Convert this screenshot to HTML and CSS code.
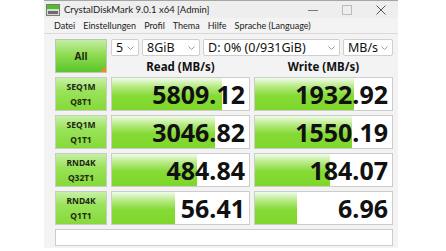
FILE: index.html
```html
<!DOCTYPE html>
<html lang="de">
<head>
    <meta charset="UTF-8">
    <meta name="viewport" content="width=device-width, initial-scale=1.0">
    <title>CrystalDiskMark</title>
    <link rel="stylesheet" href="styles.css">
</head>
<body>
    <div class="window">
        <div class="titlebar">
            <svg class="app-icon" width="14" height="12" viewBox="0 0 14 12">
                <rect x="0.5" y="0.5" width="13" height="11" fill="#d9d9d9" stroke="#7a7a7a"/>
                <rect x="1" y="1" width="12" height="4" fill="#4cbf2a"/>
                <rect x="2" y="7" width="10" height="3" fill="#6b6b6b"/>
            </svg>
            <span class="title">CrystalDiskMark 9.0.1 x64 [Admin]</span>
            <div class="controls">
                <svg width="10" height="10" viewBox="0 0 10 10"><line x1="0" y1="5.5" x2="10" y2="5.5" stroke="#777" stroke-width="1"/></svg>
                <svg width="10" height="10" viewBox="0 0 10 10"><rect x="0.5" y="0.5" width="9" height="9" fill="none" stroke="#bbb" stroke-width="1"/></svg>
                <svg width="10" height="10" viewBox="0 0 10 10"><path d="M0.5 0.5 L9.5 9.5 M9.5 0.5 L0.5 9.5" stroke="#555" stroke-width="1"/></svg>
            </div>
        </div>
        <div class="menubar">
            <span>Datei</span>
            <span>Einstellungen</span>
            <span>Profil</span>
            <span>Thema</span>
            <span>Hilfe</span>
            <span>Sprache (Language)</span>
        </div>

        <div class="main">
            <div class="all-btn">All</div>
            <div class="selects">
                <div class="select sel-count">5<svg width="7" height="4" viewBox="0 0 7 4"><path d="M0.5 0.5 L3.5 3.5 L6.5 0.5" fill="none" stroke="#999"/></svg></div>
                <div class="select sel-size">8GiB<svg width="7" height="4" viewBox="0 0 7 4"><path d="M0.5 0.5 L3.5 3.5 L6.5 0.5" fill="none" stroke="#999"/></svg></div>
                <div class="select sel-drive">D: 0% (0/931GiB)<svg width="7" height="4" viewBox="0 0 7 4"><path d="M0.5 0.5 L3.5 3.5 L6.5 0.5" fill="none" stroke="#999"/></svg></div>
                <div class="select sel-unit">MB/s<svg width="7" height="4" viewBox="0 0 7 4"><path d="M0.5 0.5 L3.5 3.5 L6.5 0.5" fill="none" stroke="#999"/></svg></div>
            </div>
            <div class="head">Read (MB/s)</div>
            <div class="head">Write (MB/s)</div>

            <div class="label">SEQ1M<br>Q8T1</div>
            <div class="cell"><div class="fill" style="width: 80%"></div><span class="value">5809.12</span></div>
            <div class="cell"><div class="fill" style="width: 72%"></div><span class="value">1932.92</span></div>

            <div class="label">SEQ1M<br>Q1T1</div>
            <div class="cell"><div class="fill" style="width: 75%"></div><span class="value">3046.82</span></div>
            <div class="cell"><div class="fill" style="width: 71%"></div><span class="value">1550.19</span></div>

            <div class="label">RND4K<br>Q32T1</div>
            <div class="cell"><div class="fill" style="width: 62%"></div><span class="value">484.84</span></div>
            <div class="cell"><div class="fill" style="width: 55%"></div><span class="value">184.07</span></div>

            <div class="label">RND4K<br>Q1T1</div>
            <div class="cell"><div class="fill" style="width: 46%"></div><span class="value">56.41</span></div>
            <div class="cell"><div class="fill" style="width: 31%"></div><span class="value">6.96</span></div>
        </div>
        <div class="status"></div>
    </div>
</body>
</html>
```

FILE: styles.css
```css
body {
    margin: 0;
    background: #ffffff;
    font-family: "Noto Sans", "Open Sans", sans-serif;
}
.window {
    margin-left: 44px;
    width: 354px;
    height: 248px;
    background: #f3f3f3;
    border-top: 1px solid #a5a5a5;
    box-sizing: border-box;
}
.titlebar {
    display: flex;
    align-items: center;
    height: 17px;
    padding-left: 2px;
    background: #eeeeee;
}
.app-icon {
    margin-right: 4px;
}
.title {
    font-family: Lato, sans-serif;
    font-size: 9.5px;
    color: #222;
}
.controls {
    margin-left: auto;
    display: flex;
    align-items: center;
    gap: 24px;
    padding-right: 12px;
}
.menubar {
    display: flex;
    align-items: center;
    gap: 8px;
    height: 14px;
    padding-left: 10px;
    padding-bottom: 1px;
    border-bottom: 1px solid #dadada;
    font-family: Lato, sans-serif;
    font-size: 9px;
    color: #222;
}
.main {
    display: grid;
    grid-template-columns: 52px 139px 139px;
    grid-template-rows: 17px 13px repeat(4, 34px);
    column-gap: 4px;
    row-gap: 4px;
    padding: 5px 5px 0 11px;
}
.all-btn {
    grid-row: 1 / 3;
    position: relative;
    display: flex;
    align-items: center;
    justify-content: center;
    border: 1px solid #b9c9b0;
    background: linear-gradient(#c4eea4, #8fdc52 45%, #5cc52a);
    font-size: 10px;
    font-weight: 700;
    color: #1d2a12;
    box-sizing: border-box;
}
.all-btn::after {
    content: "";
    position: absolute;
    right: 0;
    bottom: 0;
    border-left: 6px solid transparent;
    border-bottom: 6px solid #f08a24;
}
.selects {
    grid-column: 2 / 4;
    display: flex;
    gap: 3px;
}
.select {
    display: flex;
    align-items: center;
    justify-content: space-between;
    padding: 0 4px 0 4px;
    background: #fff;
    border: 1px solid #cfcfcf;
    border-radius: 2px;
    font-size: 12.5px;
    color: #111;
    box-sizing: border-box;
}
.sel-count { width: 28px; }
.sel-size { width: 58px; }
.sel-drive { width: 137px; }
.sel-unit { width: 50px; }
.head {
    display: flex;
    align-items: flex-end;
    justify-content: center;
    font-size: 11.5px;
    font-weight: 700;
    line-height: 12px;
    color: #111;
}
.label {
    display: flex;
    align-items: center;
    justify-content: center;
    text-align: center;
    border: 1px solid #c6cec0;
    background: linear-gradient(#c8f0a8, #9ae35a 40%, #86d93a);
    font-size: 8.5px;
    font-weight: 700;
    line-height: 15px;
    color: #1d2a12;
    box-sizing: border-box;
}
.cell {
    position: relative;
    display: flex;
    align-items: center;
    justify-content: flex-end;
    padding-right: 4px;
    background: #fff;
    border: 1px solid #cccccc;
    box-sizing: border-box;
    overflow: hidden;
}
.fill {
    position: absolute;
    left: 0;
    top: 0;
    bottom: 0;
    background: linear-gradient(#f2fbea, #b4ea80 28%, #86da36 55%, #7fd72a);
}
.value {
    position: relative;
    font-size: 25px;
    font-weight: 700;
    line-height: 1;
    color: #111;
}
.status {
    margin: 4px 5px 0 11px;
    height: 17px;
    background: #fff;
    border: 1px solid #cccccc;
    box-sizing: border-box;
}
```
